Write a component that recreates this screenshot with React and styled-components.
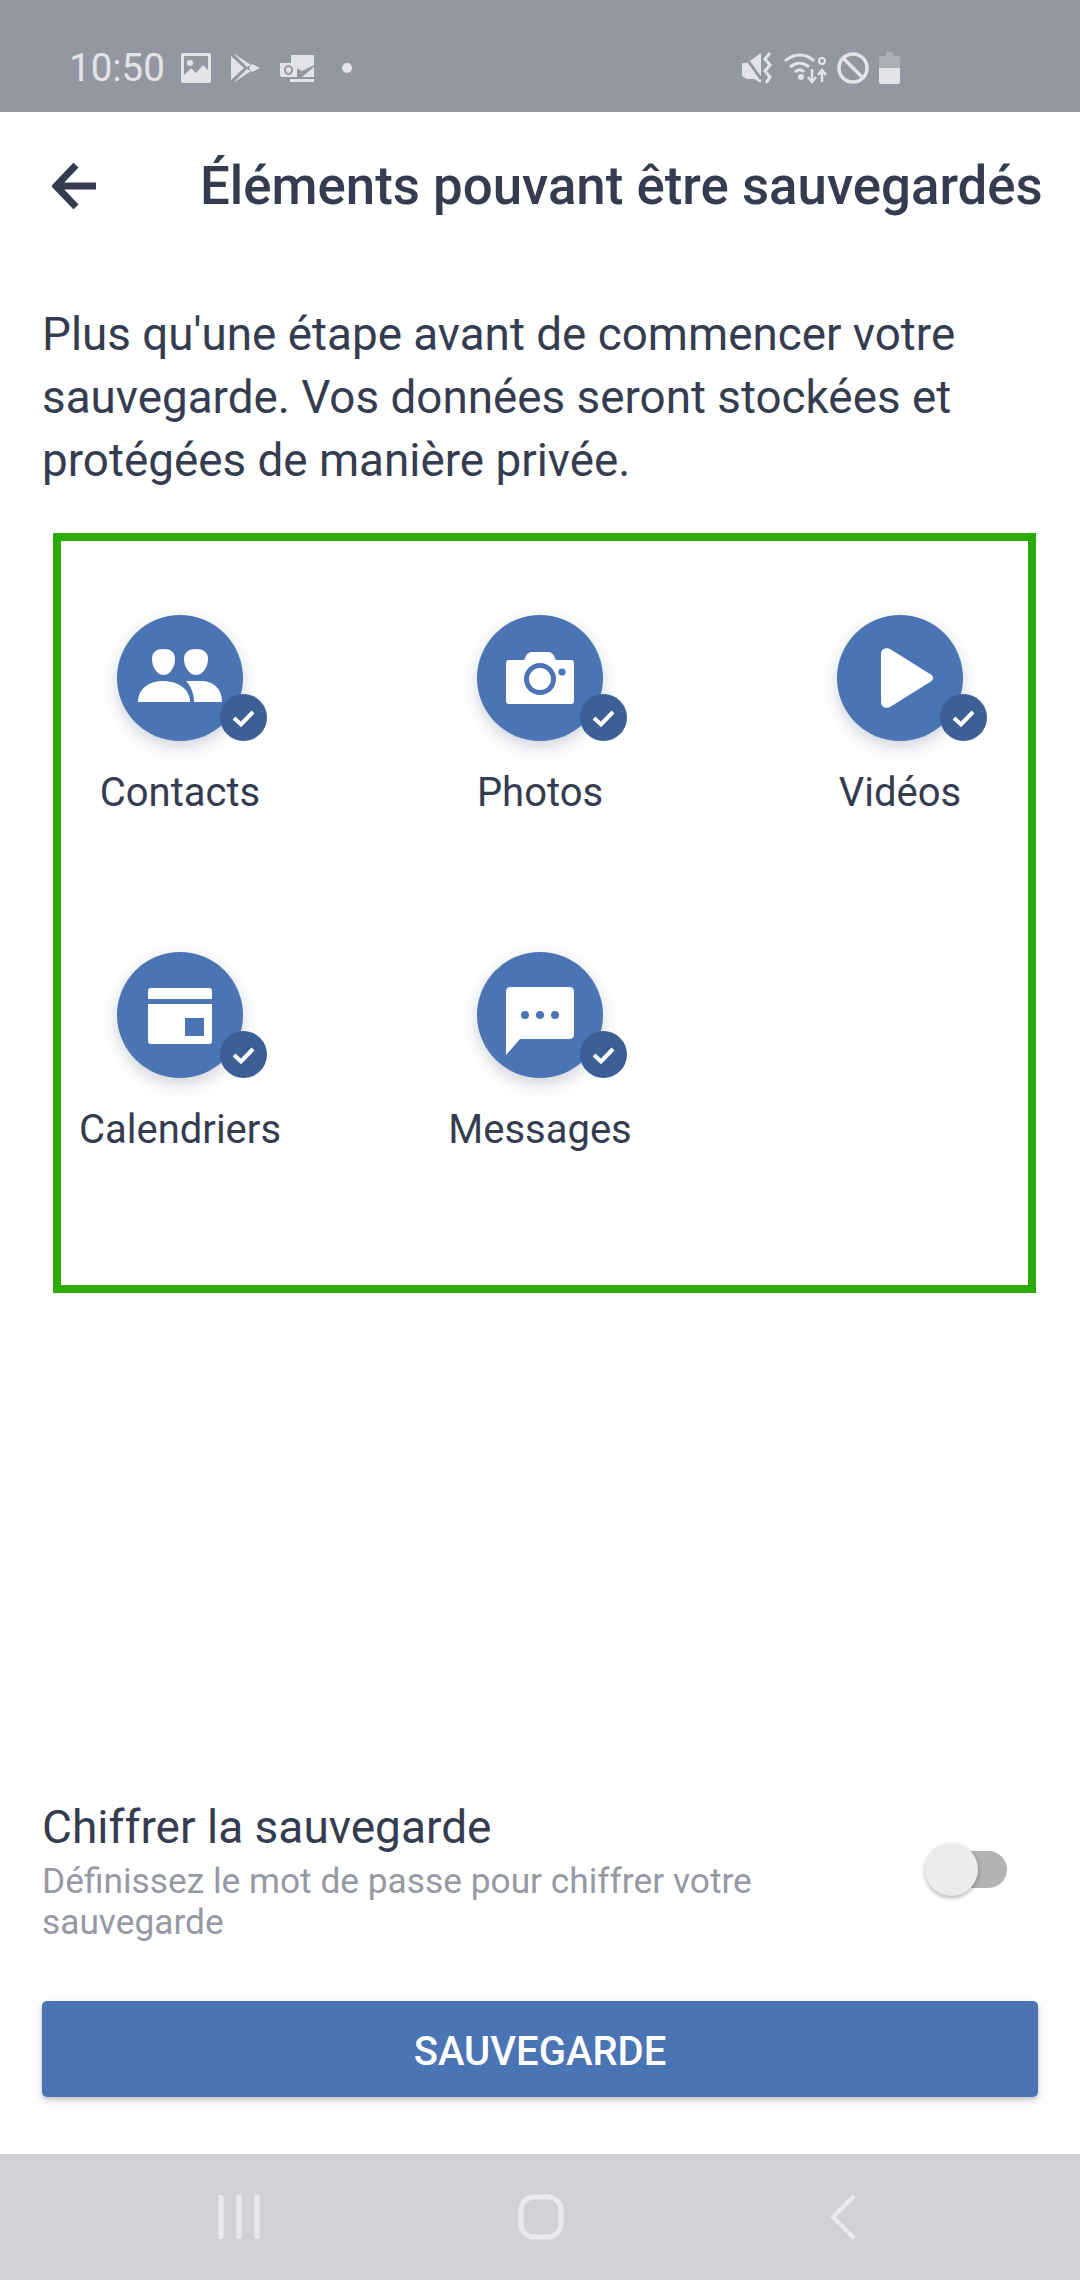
import React from 'react'
import styled, { createGlobalStyle } from 'styled-components'

const GlobalStyle = createGlobalStyle`
    html, body {
        margin: 0;
        padding: 0;
        background: #fff;
    }
    body {
        font-family: Roboto, "Liberation Sans", sans-serif;
    }
`

const Page = styled.div`
    position: relative;
    display: flex;
    flex-direction: column;
    width: 1080px;
    height: 2280px;
    overflow: hidden;
    background: #fff;
    color: #353c4f;
`

const StatusBar = styled.div`
    display: flex;
    align-items: center;
    justify-content: space-between;
    height: 112px;
    padding: 24px 180px 0 69px;
    box-sizing: border-box;
    background: #9497a2;
    color: #e3e4e8;
`

const StatusGroup = styled.div`
    display: flex;
    align-items: center;
    gap: ${(props) => props.$gap}px;
`

const Clock = styled.span`
    font-size: 38.5px;
    line-height: 46px;
    margin-right: -4px;
`

const Header = styled.div`
    display: flex;
    align-items: center;
    height: 147px;
    padding-left: 52px;
`

const BackButton = styled.div`
    display: flex;
    width: 44px;
    margin-right: 104px;
`

const Title = styled.h1`
    margin: 0;
    font-size: 52.8px;
    line-height: 60px;
    font-weight: 500;
    white-space: nowrap;
`

const Intro = styled.p`
    margin: 44px 0 0;
    padding: 0 42px;
    font-size: 45.8px;
    line-height: 63px;
`

const Grid = styled.div`
    display: grid;
    grid-template-columns: repeat(3, 360px);
    grid-auto-rows: 337px;
    margin-top: 123px;
`

const Item = styled.div`
    display: flex;
    flex-direction: column;
    align-items: center;
`

const Circle = styled.div`
    position: relative;
    width: 126px;
    height: 126px;
    border-radius: 50%;
    background: #4a74b4;
    box-shadow: 0 6px 16px rgba(40, 50, 80, 0.22);

    svg {
        display: block;
    }
`

const Badge = styled.div`
    position: absolute;
    right: -24px;
    bottom: 0;
    width: 47px;
    height: 47px;
    border-radius: 50%;
    background: #3c6095;
`

const Label = styled.div`
    margin-top: 28px;
    font-size: 40px;
    line-height: 48px;
    white-space: nowrap;
`

const Spacer = styled.div`
    flex: 1;
`

const EncryptRow = styled.div`
    display: flex;
    align-items: flex-start;
    justify-content: space-between;
    padding: 0 73px 0 42px;
`

const EncryptText = styled.div`
    width: 780px;
`

const EncryptTitle = styled.div`
    font-size: 46px;
    line-height: 50px;
`

const EncryptHint = styled.div`
    margin-top: 9px;
    font-size: 35.3px;
    line-height: 41px;
    color: #9699a4;
`

const Switch = styled.div`
    position: relative;
    width: 77px;
    height: 37px;
    margin-top: 49px;
    border-radius: 19px;
    background: #b3b3b3;
`

const Thumb = styled.div`
    position: absolute;
    left: -5px;
    top: -8px;
    width: 53px;
    height: 53px;
    border-radius: 50%;
    background: #ececec;
    box-shadow: 0 2px 4px rgba(0, 0, 0, 0.3);
`

const SaveButton = styled.button`
    display: block;
    width: 996px;
    height: 96px;
    margin: 58px 0 57px 42px;
    padding: 4px 0 0;
    border: 0;
    border-radius: 5px;
    background: #4a74b4;
    color: #fff;
    font-family: inherit;
    font-size: 40px;
    font-weight: 500;
    box-shadow: 0 3px 6px rgba(0, 0, 0, 0.25);
`

const NavBar = styled.div`
    display: grid;
    grid-template-columns: 300px 312px 1fr;
    align-items: center;
    height: 126px;
    padding-left: 218px;
    box-sizing: border-box;
    background: #d1d2d6;
`

// annotation frame drawn over the screenshot
const Highlight = styled.div`
    position: absolute;
    left: 53px;
    top: 533px;
    width: 983px;
    height: 760px;
    box-sizing: border-box;
    border: 8px solid #2aab08;
    pointer-events: none;
`

const ContactsIcon = () => (
    <svg width="126" height="126" viewBox="0 0 126 126" fill="#fff">
        <path d="M46.5 34c7 0 11.500 3 11.500 10 0 8-5 16-11.500 16S35 52 35 44c0-7 4.500-10 11.500-10z" />
        <path d="M79 34c7 0 12 3 12 10 0 8-5.500 16-12 16s-12-8-12-16c0-7 5-10 12-10z" />
        <path d="M21 87c0-14 12-21 25-21 16 0 27 9 27 21z" />
        <path d="M69 66h15c13 0 21 8 21 21H77c0-8-3-16-8-21z" />
    </svg>
)

const CameraIcon = () => (
    <svg width="126" height="126" viewBox="0 0 126 126">
        <path
            fill="#fff"
            d="M32 45h15l2-4c1-3 4-4 6-4h16c3 0 5 2 6 4l2 4h15c2 0 3 1 3 3v38c0 2-1 3-3 3H32c-2 0-3-1-3-3V48c0-2 1-3 3-3z"
        />
        <circle cx="63" cy="64" r="13.5" fill="#fff" stroke="#4a74b4" strokeWidth="5" />
        <circle cx="85" cy="57" r="3.6" fill="#4a74b4" />
    </svg>
)

const PlayIcon = () => (
    <svg width="126" height="126" viewBox="0 0 126 126">
        <path fill="#fff" d="M44 39c0-5 5-7 9-5l40 25c4 2 4 6 0 8L53 92c-4 2-9 0-9-5z" />
    </svg>
)

const CalendarIcon = () => (
    <svg width="126" height="126" viewBox="0 0 126 126">
        <path fill="#fff" d="M34 36h58c2 0 3 1 3 3v8H31v-8c0-2 1-3 3-3z" />
        <path fill="#fff" d="M31 52h64v37c0 2-1 3-3 3H34c-2 0-3-1-3-3z" />
        <rect x="68" y="66" width="19" height="18" fill="#4a74b4" />
    </svg>
)

const MessageIcon = () => (
    <svg width="126" height="126" viewBox="0 0 126 126">
        <path fill="#fff" d="M33 35h60c2 0 4 2 4 4v44c0 2-2 4-4 4H43l-14 16V39c0-2 2-4 4-4z" />
        <circle cx="48" cy="63" r="4" fill="#4a74b4" />
        <circle cx="63" cy="63" r="4" fill="#4a74b4" />
        <circle cx="78" cy="63" r="4" fill="#4a74b4" />
    </svg>
)

const CheckIcon = () => (
    <svg width="47" height="47" viewBox="0 0 47 47" fill="none">
        <path d="M14 24l7 6.500L33 18" stroke="#fff" strokeWidth="4" />
    </svg>
)

const items = [
    { label: 'Contacts', icon: <ContactsIcon /> },
    { label: 'Photos', icon: <CameraIcon /> },
    { label: 'Vidéos', icon: <PlayIcon /> },
    { label: 'Calendriers', icon: <CalendarIcon /> },
    { label: 'Messages', icon: <MessageIcon /> },
]

const App = () => (
    <Page>
        <GlobalStyle />
        <StatusBar>
            <StatusGroup $gap={20}>
                <Clock>10:50</Clock>
                <svg width="30" height="30" viewBox="0 0 30 30" fill="#e3e4e8">
                    <path d="M2 0h26c1 0 2 1 2 2v26c0 1-1 2-2 2H2c-1 0-2-1-2-2V2C0 1 1 0 2 0zm1 3v19l7-7 5 5 7-8 5 5V3z" />
                    <circle cx="9" cy="10" r="3" />
                </svg>
                <svg width="29" height="30" viewBox="0 0 29 30" fill="#e3e4e8">
                    <path d="M0 3l13 12L0 27zM2 0l18 12-4 2zM2 30l14-14 4 2zM21 11l8 4-8 4-3-4z" />
                </svg>
                <svg width="34" height="27" viewBox="0 0 34 27" fill="#e3e4e8">
                    <path d="M11 0h23v10l-12 6-11-6zM0 8h17v14H2c-1 0-2-1-2-2z" />
                    <path d="M34 12v10H22zM10 24h24v3H10z" />
                    <ellipse cx="8.500" cy="15" rx="3.500" ry="4" fill="none" stroke="#9497a2" strokeWidth="2" />
                </svg>
                <svg width="20" height="10" viewBox="0 0 20 10" fill="#e3e4e8">
                    <circle cx="13" cy="5" r="5" />
                </svg>
            </StatusGroup>
            <StatusGroup $gap={10}>
                <svg width="32" height="32" viewBox="0 0 32 32" fill="none">
                    <path fill="#e3e4e8" d="M0 11h5l14-10v30l-7-4H5l-5-3z" />
                    <path d="M2 3l17 24" stroke="#9497a2" strokeWidth="3" />
                    <path d="M28 1l-5 6 5 6-5 6 5 6-4 6" stroke="#e3e4e8" strokeWidth="3" />
                </svg>
                <svg width="43" height="32" viewBox="0 0 43 32" fill="none">
                    <path d="M1 9c9-8 21-8 29 0M6 15c6-5 13-5 19 0M11 20c3-3 6-3 9 0" stroke="#e3e4e8" strokeWidth="3" />
                    <circle cx="17" cy="25" r="3" fill="#e3e4e8" />
                    <path d="M28 17v12M24 25l4 5 4-5M38 30V20M34 23l4-5 4 5" stroke="#e3e4e8" strokeWidth="2.500" />
                    <circle cx="38" cy="9" r="3" stroke="#e3e4e8" strokeWidth="2" />
                </svg>
                <svg width="32" height="32" viewBox="0 0 32 32" fill="none">
                    <circle cx="16" cy="16" r="14" stroke="#e3e4e8" strokeWidth="3.500" />
                    <path d="M6 6l20 20" stroke="#e3e4e8" strokeWidth="3.500" />
                </svg>
                <svg width="21" height="32" viewBox="0 0 21 32">
                    <path fill="#adafb8" d="M7 0h7v4h5c1 0 2 1 2 2v10H0V6c0-1 1-2 2-2h5z" />
                    <path fill="#e3e4e8" d="M0 16h21v14c0 1-1 2-2 2H2c-1 0-2-1-2-2z" />
                </svg>
            </StatusGroup>
        </StatusBar>

        <Header>
            <BackButton>
                <svg width="44" height="46" viewBox="0 0 44 46" fill="none">
                    <path d="M44 23H5M24 2L4 23l20 21" stroke="#353c4f" strokeWidth="7" />
                </svg>
            </BackButton>
            <Title>Éléments pouvant être sauvegardés</Title>
        </Header>

        <Intro>
            Plus qu'une étape avant de commencer votre sauvegarde. Vos données seront stockées et
            protégées de manière privée.
        </Intro>

        <Grid>
            {items.map((item) => (
                <Item key={item.label}>
                    <Circle>
                        {item.icon}
                        <Badge>
                            <CheckIcon />
                        </Badge>
                    </Circle>
                    <Label>{item.label}</Label>
                </Item>
            ))}
        </Grid>

        <Spacer />

        <EncryptRow>
            <EncryptText>
                <EncryptTitle>Chiffrer la sauvegarde</EncryptTitle>
                <EncryptHint>Définissez le mot de passe pour chiffrer votre sauvegarde</EncryptHint>
            </EncryptText>
            <Switch>
                <Thumb />
            </Switch>
        </EncryptRow>

        <SaveButton>SAUVEGARDE</SaveButton>

        <NavBar>
            <svg width="42" height="44" viewBox="0 0 42 44" fill="none">
                <path d="M3 2v40M21 2v40M39 2v40" stroke="#e9eaec" strokeWidth="5" strokeLinecap="round" />
            </svg>
            <svg width="46" height="46" viewBox="0 0 46 46" fill="none">
                <rect x="3" y="3" width="40" height="40" rx="13" stroke="#e9eaec" strokeWidth="5" />
            </svg>
            <svg width="26" height="44" viewBox="0 0 26 44" fill="none">
                <path d="M23 2L3 22l20 20" stroke="#e9eaec" strokeWidth="4" strokeLinecap="round" />
            </svg>
        </NavBar>

        <Highlight />
    </Page>
)

export default App
